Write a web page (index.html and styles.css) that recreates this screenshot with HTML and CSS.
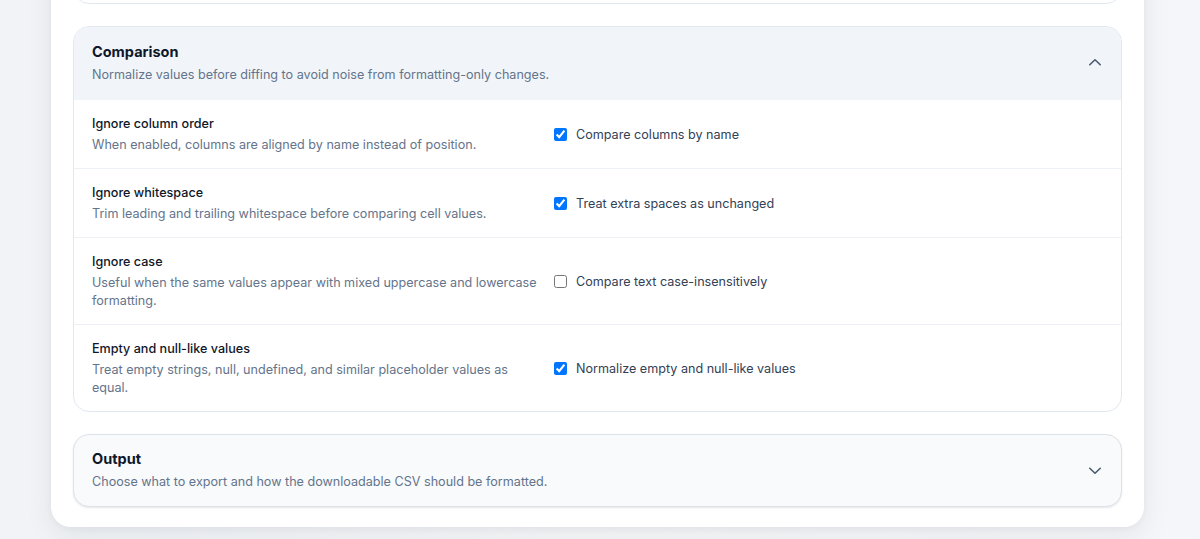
FILE: index.html
```html
<!DOCTYPE html>
<html lang="en">
<head>
    <meta charset="UTF-8">
    <title>Diff settings</title>
    <link rel="stylesheet" href="styles.css">
</head>
<body>

<div class="page">
    <div class="panel">

        <!-- previous section, scrolled out of view -->
        <section class="group stub"></section>

        <section class="group open">
            <div class="group-head">
                <div>
                    <div class="group-title">Comparison</div>
                    <div class="group-desc">Normalize values before diffing to avoid noise from formatting-only changes.</div>
                </div>
                <svg class="chevron" width="16" height="16" viewBox="0 0 16 16">
                    <path d="M2.75 9.75 8 4.75l5.25 5"/>
                </svg>
            </div>

            <div class="option">
                <div>
                    <div class="option-label">Ignore column order</div>
                    <div class="option-desc">When enabled, columns are aligned by name instead of position.</div>
                </div>
                <label class="check">
                    <input type="checkbox" checked>
                    <span>Compare columns by name</span>
                </label>
            </div>

            <div class="option">
                <div>
                    <div class="option-label">Ignore whitespace</div>
                    <div class="option-desc">Trim leading and trailing whitespace before comparing cell values.</div>
                </div>
                <label class="check">
                    <input type="checkbox" checked>
                    <span>Treat extra spaces as unchanged</span>
                </label>
            </div>

            <div class="option">
                <div>
                    <div class="option-label">Ignore case</div>
                    <div class="option-desc">Useful when the same values appear with mixed uppercase and lowercase formatting.</div>
                </div>
                <label class="check">
                    <input type="checkbox">
                    <span>Compare text case-insensitively</span>
                </label>
            </div>

            <div class="option">
                <div>
                    <div class="option-label">Empty and null-like values</div>
                    <div class="option-desc">Treat empty strings, null, undefined, and similar placeholder values as equal.</div>
                </div>
                <label class="check">
                    <input type="checkbox" checked>
                    <span>Normalize empty and null-like values</span>
                </label>
            </div>
        </section>

        <section class="group closed">
            <div class="group-head">
                <div>
                    <div class="group-title">Output</div>
                    <div class="group-desc">Choose what to export and how the downloadable CSV should be formatted.</div>
                </div>
                <svg class="chevron" width="16" height="16" viewBox="0 0 16 16">
                    <path d="M2.75 6.25 8 11.25l5.25-5"/>
                </svg>
            </div>
        </section>

    </div>
</div>

</body>
</html>
```

FILE: styles.css
```css
body {
    font-family: Inter, "Noto Sans", Arial, sans-serif;
    margin: 0;
    padding: 0;
    background: linear-gradient(90deg, #f1f3f6 0%, #f7f8fa 50%, #f5f6f9 100%);
    color: #0f172a;
    overflow: hidden;
}

.page {
    margin-top: -92px;
    padding: 0 56px 12px 51px;
}

.panel {
    background-color: #ffffff;
    border-radius: 20px;
    padding: 22px 22px 20px;
    display: flex;
    flex-direction: column;
    gap: 22px;
    box-shadow: 0 10px 30px rgba(15, 23, 42, 0.07), 0 2px 6px rgba(15, 23, 42, 0.04);
}

.group {
    border: 1px solid #e2e8f0;
    border-radius: 16px;
    overflow: hidden;
    background-color: #ffffff;
}

.group.stub {
    height: 72px;
}

.group-head {
    display: flex;
    align-items: center;
    justify-content: space-between;
    padding: 14px 18px 15px 18px;
}

.group.open .group-head {
    background-color: #f1f5f9;
}

.group.closed {
    background-color: #f8fafc;
    border-color: #dde3ea;
    box-shadow: 0 1px 2px rgba(15, 23, 42, 0.10);
}

.group.closed .group-head {
    padding-top: 13px;
    padding-bottom: 14px;
}

.group-title {
    font-size: 14.5px;
    line-height: 22px;
    font-weight: 700;
    color: #0f172a;
}

.group-desc {
    font-size: 12.6px;
    line-height: 20px;
    color: #64748b;
    margin-top: 2px;
}

.chevron {
    flex: none;
    fill: none;
    stroke: #4b5b70;
    stroke-width: 1.6;
    stroke-linecap: round;
    stroke-linejoin: round;
}

.option {
    display: grid;
    grid-template-columns: 447px 1fr;
    column-gap: 15px;
    align-items: center;
    padding: 14px 17px 14px 18px;
    border-top: 1px solid #edf1f5;
}

.group.open .group-head + .option {
    border-top: none;
}

.option-label {
    font-size: 12.6px;
    line-height: 20px;
    font-weight: 500;
    color: #0f172a;
}

.option-desc {
    font-size: 12.6px;
    line-height: 18px;
    color: #64748b;
    margin-top: 2px;
}

.check {
    display: flex;
    align-items: center;
    gap: 9px;
    font-size: 12.6px;
    color: #334155;
}

.check input {
    margin: 0;
    width: 13px;
    height: 13px;
}
```
